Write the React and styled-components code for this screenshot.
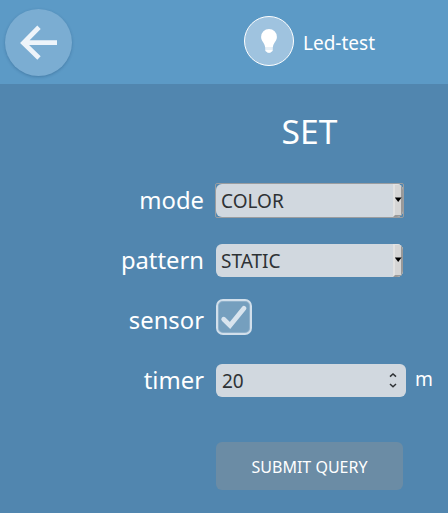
import React from "react";
import styled, { createGlobalStyle } from "styled-components";

const GlobalStyle = createGlobalStyle`
  *, *::before, *::after { box-sizing: border-box; }
  body {
    margin: 0;
    background: #5186af;
    color: #fff;
    font-family: "Noto Sans", "Open Sans", sans-serif;
    overflow: hidden;
  }
`;

const Page = styled.div`
  width: 448px;
  height: 513px;
  display: flex;
  flex-direction: column;
`;

const Header = styled.header`
  height: 84px;
  flex: none;
  display: flex;
  align-items: flex-start;
  background: #5c9ac6;
`;

const BackButton = styled.button`
  width: 67px;
  height: 67px;
  margin: 9px 172px 0 5px;
  padding: 0;
  border: 0;
  border-radius: 50%;
  background: #7badd2;
  box-shadow: 0 1px 3px rgba(20, 60, 100, 0.3);
  svg { display: block; }
`;

const Device = styled.div`
  display: flex;
  align-items: center;
  gap: 9px;
  margin-top: 16px;
`;

const Avatar = styled.div`
  width: 50px;
  height: 50px;
  border: 1px solid #fff;
  border-radius: 50%;
  background: #9fc3df;
  svg { display: block; }
`;

const DeviceName = styled.span`
  font-size: 19px;
  line-height: 26px;
  padding-top: 3px;
`;

const Form = styled.form`
  display: flex;
  flex-direction: column;
`;

const Title = styled.h1`
  margin: 22px 0 16px 216px;
  width: 187px;
  height: 48px;
  font-size: 33.6px;
  line-height: 50px;
  font-weight: 400;
  text-align: center;
`;

const Row = styled.div`
  display: grid;
  grid-template-columns: 204px 190px auto;
  column-gap: 12px;
  height: 60px;
  align-items: center;
`;

const Label = styled.label`
  text-align: right;
  font-size: 23.8px;
  line-height: 34px;
`;

const SelectBox = styled.div`
  width: 187px;
  height: 33px;
  display: flex;
  justify-content: space-between;
  border-radius: 6px;
  overflow: hidden;
  background: #d1d8df;
  color: #2e3235;
`;

const FocusFrame = styled.div`
  width: 189px;
  height: 35px;
  margin-left: -1px;
  border: 1px solid ${(p) => (p.$focused ? "#9a9da0" : "transparent")};
  border-radius: 2px;
`;

const Value = styled.span`
  padding-left: ${(p) => p.$inset}px;
  font-size: 19px;
  line-height: 34px;
`;

const DropButton = styled.span`
  width: 10px;
  height: 33px;
  display: flex;
  align-items: center;
  justify-content: center;
  border: solid;
  border-width: 1px 2px 2px 2px;
  border-color: #e2e2e2 #999 #999 #e2e2e2;
  background: #d5d5d5;
  svg { flex: none; }
`;

const CheckBox = styled.div`
  width: 36px;
  height: 36px;
  margin-top: -6px;
  border: 2px solid #d1dfeb;
  border-radius: 7px;
  background: #759fbe;
  box-shadow: inset 0 0 0 1px #8fb1cb;
  svg { display: block; }
`;

const NumberBox = styled.div`
  width: 190px;
  height: 33px;
  display: flex;
  justify-content: space-between;
  border-radius: 6px;
  background: #d1d8df;
  color: #2e3235;
`;

const Stepper = styled.svg`
  margin: 8px 9px 0 0;
`;

const Unit = styled.span`
  margin: -2px 0 0 -3px;
  font-size: 19.2px;
  line-height: 28px;
`;

const SubmitButton = styled.button`
  width: 187px;
  height: 48px;
  margin: 32px 0 0 216px;
  padding: 2px 0 0;
  border: 0;
  border-radius: 6px;
  background: #6b8ca5;
  color: #fff;
  font: 16px "Noto Sans", "Open Sans", sans-serif;
`;

function Select({ focused, children }) {
  return (
    <FocusFrame $focused={focused}>
      <SelectBox>
        <Value $inset={5}>{children}</Value>
        <DropButton>
          <svg width="8" height="5" viewBox="0 0 8 5">
            <path d="M0.8 0.5h6.8L4.2 5z" fill="#000" />
          </svg>
        </DropButton>
      </SelectBox>
    </FocusFrame>
  );
}

export default function App() {
  return (
    <Page>
      <GlobalStyle />
      <Header>
        <BackButton type="button" aria-label="Back">
          <svg width="67" height="67" viewBox="0 0 67 67">
            <path
              d="M34 18.2 18.5 34 34 49M19 33.6H52"
              fill="none"
              stroke="#eef4fa"
              strokeWidth="4.8"
            />
          </svg>
        </BackButton>
        <Device>
          <Avatar>
            <svg width="48" height="48" viewBox="0 0 48 48" fill="#fff">
              <path d="M24 12a7.9 7.9 0 0 0-7.9 7.9c0 4.3 3.7 5.4 4.1 10.9h7.6c.4-5.5 4.1-6.600 4.1-10.900A7.900 7.900 0 0 0 24 12z" />
              <path d="M20.2 31.2h7.6v1.3h-7.6zM20.2 32.8h7.6c0 1.4-.8 2-1.8 2.3-.4 1.2-3.6 1.2-4 0-1-.3-1.8-.9-1.8-2.3z" />
            </svg>
          </Avatar>
          <DeviceName>Led-test</DeviceName>
        </Device>
      </Header>
      <Form>
        <Title>SET</Title>
        <Row>
          <Label>mode</Label>
          <Select focused>COLOR</Select>
        </Row>
        <Row>
          <Label>pattern</Label>
          <Select>STATIC</Select>
        </Row>
        <Row>
          <Label>sensor</Label>
          <CheckBox role="checkbox" aria-checked="true">
            <svg width="32" height="32" viewBox="0 0 32 32">
              <path
                d="M5.7 18.3 12 24.5 26 7.3"
                fill="none"
                stroke="#d8e4ee"
                strokeWidth="4.8"
                strokeLinecap="round"
              />
            </svg>
          </CheckBox>
        </Row>
        <Row>
          <Label>timer</Label>
          <NumberBox>
            <Value $inset={6}>20</Value>
            <Stepper width="8" height="17" viewBox="0 0 8 17">
              <path
                d="M1 4.6 4 1.9 7 4.6M1 12 4 14.7 7 12"
                fill="none"
                stroke="#2e3235"
                strokeWidth="1.5"
              />
            </Stepper>
          </NumberBox>
          <Unit>m</Unit>
        </Row>
        <SubmitButton type="button">SUBMIT QUERY</SubmitButton>
      </Form>
    </Page>
  );
}
